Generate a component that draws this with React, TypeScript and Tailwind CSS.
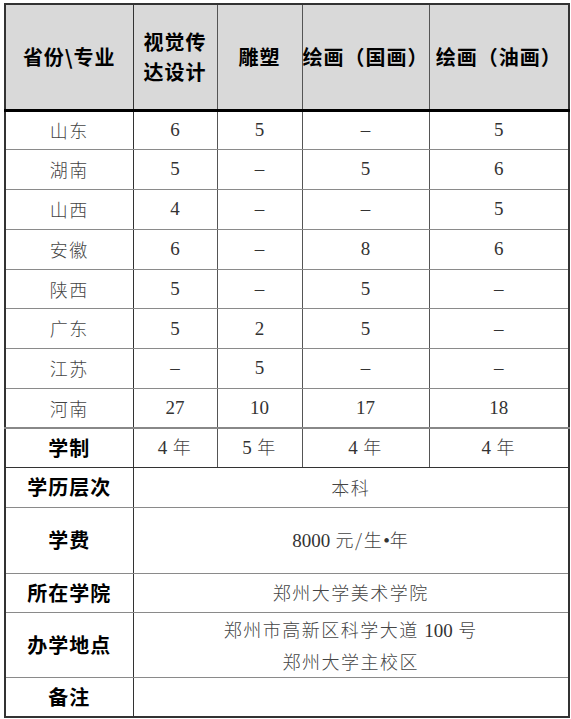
import React from 'react';

const serif = { fontFamily: '"Liberation Serif", "Noto Sans CJK SC", serif' };

const majors = ['视觉传达设计', '雕塑', '绘画（国画）', '绘画（油画）'];

const quotas: [string, string, string, string, string][] = [
  ['山东', '6', '5', '–', '5'],
  ['湖南', '5', '–', '5', '6'],
  ['山西', '4', '–', '–', '5'],
  ['安徽', '6', '–', '8', '6'],
  ['陕西', '5', '–', '5', '–'],
  ['广东', '5', '2', '5', '–'],
  ['江苏', '–', '5', '–', '–'],
  ['河南', '27', '10', '17', '18'],
];

const cell = 'border border-[#8a8a8a] p-0 text-center align-middle';
const label = 'font-bold text-[20px] tracking-[1px] text-black';
const body = 'text-[18px] tracking-[1.5px] text-[#444] font-light';
const num = 'text-[19px] text-[#333] font-normal tracking-normal';

export default function App() {
  return (
    <div className="min-h-[719px] bg-white pl-[4px] pt-[3px]" style={{ fontFamily: '"Noto Sans CJK SC", sans-serif' }}>
      <table className="w-[564px] table-fixed border-collapse border-2 border-[#333]">
        <colgroup>
          <col className="w-[128px]" />
          <col className="w-[84px]" />
          <col className="w-[85px]" />
          <col className="w-[127px]" />
          <col className="w-[140px]" />
        </colgroup>
        <thead>
          <tr className="h-[106px] bg-[#d9d9d9]">
            <th className={`${cell} border-b-[3px] border-b-black border-r-[#333] ${label}`}>省份\专业</th>
            {majors.map((m, i) => (
              <th
                key={m}
                className={`${cell} border-b-[3px] border-b-black border-r-[#555] ${label} ${
                  i === 0 ? 'px-[6px] leading-[30px]' : 'tracking-[0.5px]'
                }`}
              >
                {m}
              </th>
            ))}
          </tr>
        </thead>
        <tbody>
          {quotas.map((row, r) => (
            <tr key={row[0]} className="h-[39.8px]">
              {row.map((v, i) => (
                <td
                  key={i}
                  className={`${cell} ${i === 0 ? 'border-r-[#333]' : 'border-r-[#555]'} ${
                    r === quotas.length - 1 ? 'border-b-2 border-b-[#888]' : ''
                  } ${body}`}
                  style={i === 0 ? undefined : serif}
                >
                  {i === 0 ? v : <span className={num}>{v}</span>}
                </td>
              ))}
            </tr>
          ))}
          <tr className="h-[39px]">
            <td className={`${cell} border-b-[#333] border-r-[#333] ${label}`}>学制</td>
            {['4', '5', '4', '4'].map((y, i) => (
              <td key={i} className={`${cell} border-b-[#333] border-r-[#555] ${body}`}>
                <span style={serif} className={num}>{y}</span> 年
              </td>
            ))}
          </tr>
          <tr className="h-[40px]">
            <td className={`${cell} border-r-[#333] ${label}`}>学历层次</td>
            <td colSpan={4} className={`${cell} ${body}`}>本科</td>
          </tr>
          <tr className="h-[66px]">
            <td className={`${cell} border-r-[#333] ${label}`}>学费</td>
            <td colSpan={4} className={`${cell} ${body}`}>
              <span style={serif} className={num}>8000</span> 元/生<span style={serif} className={num}>•</span>年
            </td>
          </tr>
          <tr className="h-[39px]">
            <td className={`${cell} border-r-[#333] ${label}`}>所在学院</td>
            <td colSpan={4} className={`${cell} ${body}`}>郑州大学美术学院</td>
          </tr>
          <tr className="h-[65px]">
            <td className={`${cell} border-r-[#333] ${label}`}>办学地点</td>
            <td colSpan={4} className={`${cell} ${body} leading-[30px]`}>
              郑州市高新区科学大道 <span style={serif} className={num}>100</span> 号
              <br />
              郑州大学主校区
            </td>
          </tr>
          <tr className="h-[40px]">
            <td className={`${cell} border-r-[#333] ${label}`}>备注</td>
            <td colSpan={4} className={`${cell} ${body}`}></td>
          </tr>
        </tbody>
      </table>
    </div>
  );
}
